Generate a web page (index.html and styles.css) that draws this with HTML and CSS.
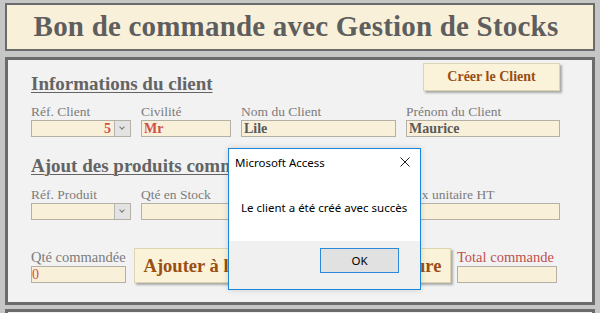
FILE: index.html
```html
<!DOCTYPE html>
<html lang="fr">
<head>
    <meta charset="UTF-8">
    <title>Bon de commande</title>
    <link rel="stylesheet" href="styles.css">
</head>
<body>
    <div class="title-box">Bon de commande avec Gestion de Stocks</div>

    <div class="panel">
        <div class="row head-row">
            <h2 class="section">Informations du client</h2>
            <div class="btn btn-client">Créer le Client</div>
        </div>

        <div class="row fields">
            <div class="field w100">
                <span class="lbl">Réf. Client</span>
                <span class="box combo"><span class="val red right">5</span><span class="drop"></span></span>
            </div>
            <div class="field w90">
                <span class="lbl">Civilité</span>
                <span class="box"><span class="val red">Mr</span></span>
            </div>
            <div class="field w155">
                <span class="lbl">Nom du Client</span>
                <span class="box"><span class="val">Lile</span></span>
            </div>
            <div class="field w154">
                <span class="lbl">Prénom du Client</span>
                <span class="box"><span class="val">Maurice</span></span>
            </div>
        </div>

        <h2 class="section second">Ajout des produits commandés</h2>

        <div class="row fields">
            <div class="field w100">
                <span class="lbl">Réf. Produit</span>
                <span class="box combo"><span class="val"></span><span class="drop"></span></span>
            </div>
            <div class="field w90">
                <span class="lbl">Qté en Stock</span>
                <span class="box"></span>
            </div>
            <div class="field w155">
                <span class="lbl">Désignation</span>
                <span class="box"></span>
            </div>
            <div class="field w154">
                <span class="lbl">Prix unitaire HT</span>
                <span class="box"></span>
            </div>
        </div>

        <div class="row order-row">
            <div class="field w95">
                <span class="lbl big">Qté commandée</span>
                <span class="box"><span class="val red thin">0</span></span>
            </div>
            <div class="btn btn-add">Ajouter à la commande et à la facture</div>
            <div class="field w100">
                <span class="lbl big red">Total commande</span>
                <span class="box"></span>
            </div>
        </div>

        <div class="dialog">
            <div class="dlg-title">
                <span>Microsoft Access</span>
                <svg class="dlg-close" width="10" height="10" viewBox="0 0 10 10">
                    <path d="M0.5 0.5 L9.5 9.5 M9.5 0.5 L0.5 9.5" stroke="#222" stroke-width="1"/>
                </svg>
            </div>
            <div class="dlg-msg">Le client a été créé avec succès</div>
            <div class="dlg-foot">
                <div class="dlg-ok">OK</div>
            </div>
        </div>
    </div>

    <div class="panel-next"></div>
</body>
</html>
```

FILE: styles.css
```css
*{
    box-sizing: border-box;
}
body{
    margin: 0;
    padding: 3px 5px 0 5px;
    width: 600px;
    height: 313px;
    overflow: hidden;
    background: #c6c6c6;
    font-family: 'Liberation Serif', 'DejaVu Serif', serif;
}
.title-box{
    height: 48px;
    border: 2px solid #6b6b6b;
    background: #f9f0da;
    color: #5e5e5e;
    font-weight: bold;
    font-size: 29px;
    letter-spacing: 0.2px;
    line-height: 43px;
    text-align: center;
    padding-right: 8px;
}
.panel{
    position: relative;
    margin-top: 6px;
    height: 248px;
    border: 3px solid #6b6b6b;
    background: #f2f2f2;
    padding: 3px 0 0 23px;
}
.panel-next{
    margin-top: 4px;
    height: 5px;
    border: 3px solid #6b6b6b;
    border-bottom: none;
    background: #f2f2f2;
}
.row{
    display: flex;
    width: 529px;
}
.head-row{
    justify-content: space-between;
    align-items: flex-start;
    height: 40px;
}
.section{
    margin: 0;
    font-size: 19px;
    color: #646464;
    text-decoration: underline;
    text-decoration-thickness: 1px;
    text-underline-offset: 2px;
    font-weight: bold;
}
.head-row .section{
    margin-top: 10px;
}
.section.second{
    margin-top: 18px;
    height: 31px;
}
.btn{
    background: #fbf2da;
    border: 1px solid #ddd5b2;
    box-shadow: 2px 2px 2px #a9a9a9;
    color: #9a4f12;
    font-weight: bold;
    display: flex;
    align-items: center;
    justify-content: center;
    white-space: nowrap;
}
.btn-client{
    width: 137px;
    height: 28px;
    font-size: 14px;
}
.fields{
    gap: 10px;
}
.field{
    display: flex;
    flex-direction: column;
}
.lbl{
    font-size: 13.5px;
    color: #7c7c7c;
    height: 17px;
    line-height: 17px;
    white-space: nowrap;
}
.lbl.big{
    font-size: 14.5px;
}
.lbl.red{
    color: #c0504d;
}
.box{
    display: flex;
    height: 17px;
    border: 1px solid #b5b0a6;
    background: #f9f0da;
}
.val{
    flex: 1;
    font-size: 14px;
    font-weight: bold;
    color: #5a5a5a;
    line-height: 15px;
    padding: 0 2px;
}
.val.red{
    color: #d0504a;
}
.val.right{
    text-align: right;
}
.val.thin{
    font-weight: normal;
    padding-left: 0;
}
.drop{
    width: 16px;
    background: #e3e3e3;
    border-left: 1px solid #b5b5b5;
    position: relative;
}
.drop::after{
    content: "";
    position: absolute;
    left: 5px;
    top: 4px;
    width: 3px;
    height: 3px;
    border-right: 1px solid #777;
    border-bottom: 1px solid #777;
    transform: rotate(45deg);
}
.combo .val{
    padding-right: 3px;
}
.w100{ width: 100px; }
.w90{ width: 90px; }
.w155{ width: 155px; }
.w154{ width: 154px; }
.w95{ width: 95px; }
.order-row{
    margin-top: 28px;
    align-items: flex-start;
}
.order-row .field{
    margin-top: 1px;
}
.order-row .field:last-child{
    margin-left: 6px;
}
.btn-add{
    width: 317px;
    height: 35px;
    margin-left: 8px;
    font-size: 18.5px;
    padding-top: 1px;
}
.dialog{
    position: absolute;
    left: 220px;
    top: 88px;
    width: 193px;
    height: 142px;
    border: 1px solid #1b86d9;
    background: #fff;
    font-family: 'Noto Sans', 'DejaVu Sans', sans-serif;
    font-size: 11.5px;
    color: #000;
    display: flex;
    flex-direction: column;
    box-shadow: 0 0 6px rgba(0,0,0,0.15);
}
.dlg-title{
    display: flex;
    justify-content: space-between;
    align-items: center;
    padding: 4px 10px 0 6px;
    height: 22px;
}
.dlg-msg{
    padding: 29px 0 0 12px;
    height: 70px;
}
.dlg-foot{
    flex: 1;
    background: #f0f0f0;
    display: flex;
    justify-content: flex-end;
    padding: 7px 21px 0 0;
}
.dlg-ok{
    width: 79px;
    height: 25px;
    border: 1px solid #2a8ad8;
    background: #e1e1e1;
    display: flex;
    align-items: center;
    justify-content: center;
}
```
